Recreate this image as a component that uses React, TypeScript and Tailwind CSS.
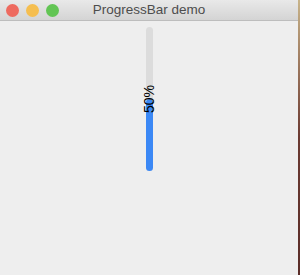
import React from 'react';

export default function App() {
    const value = 50;
    return (
        <div className="flex w-[300px] h-[275px] overflow-hidden" style={{ fontFamily: '"Helvetica Neue", "Liberation Sans", Arial, sans-serif' }}>
            <div className="flex flex-col w-[298px] h-full bg-[#eeeeee]">
                {/* Title bar */}
                <div className="relative flex items-center h-[21px] bg-gradient-to-b from-[#e9e9e9] to-[#d4d4d4] border-b border-[#bdbdbd]">
                    <div className="flex items-center gap-[7px] pl-[6px]">
                        <span className="w-[13px] h-[13px] rounded-full bg-[#ee6a5f]" />
                        <span className="w-[13px] h-[13px] rounded-full bg-[#f5be4f]" />
                        <span className="w-[13px] h-[13px] rounded-full bg-[#62c554]" />
                    </div>
                    <div className="absolute inset-0 flex items-center justify-center text-[13.5px] text-[#4d4d4d]">
                        ProgressBar demo
                    </div>
                </div>

                {/* Content */}
                <div className="flex justify-center pt-[6px] pl-[1px]">
                    <div className="relative w-[7px] h-[144px] rounded-full bg-[#dcdcdc]">
                        <div className="absolute bottom-0 left-0 right-0 rounded-full bg-[#3b88f5]" style={{ height: `${value}%` }} />
                        <div className="absolute inset-0 flex items-center justify-center">
                            <span className="-rotate-90 whitespace-nowrap text-[14px] leading-none text-black">{value}%</span>
                        </div>
                    </div>
                </div>
            </div>
            <div className="w-[2px] h-full bg-gradient-to-b from-[#c8b48a] via-[#6b3a32] to-[#5a2d28]" />
        </div>
    );
}
